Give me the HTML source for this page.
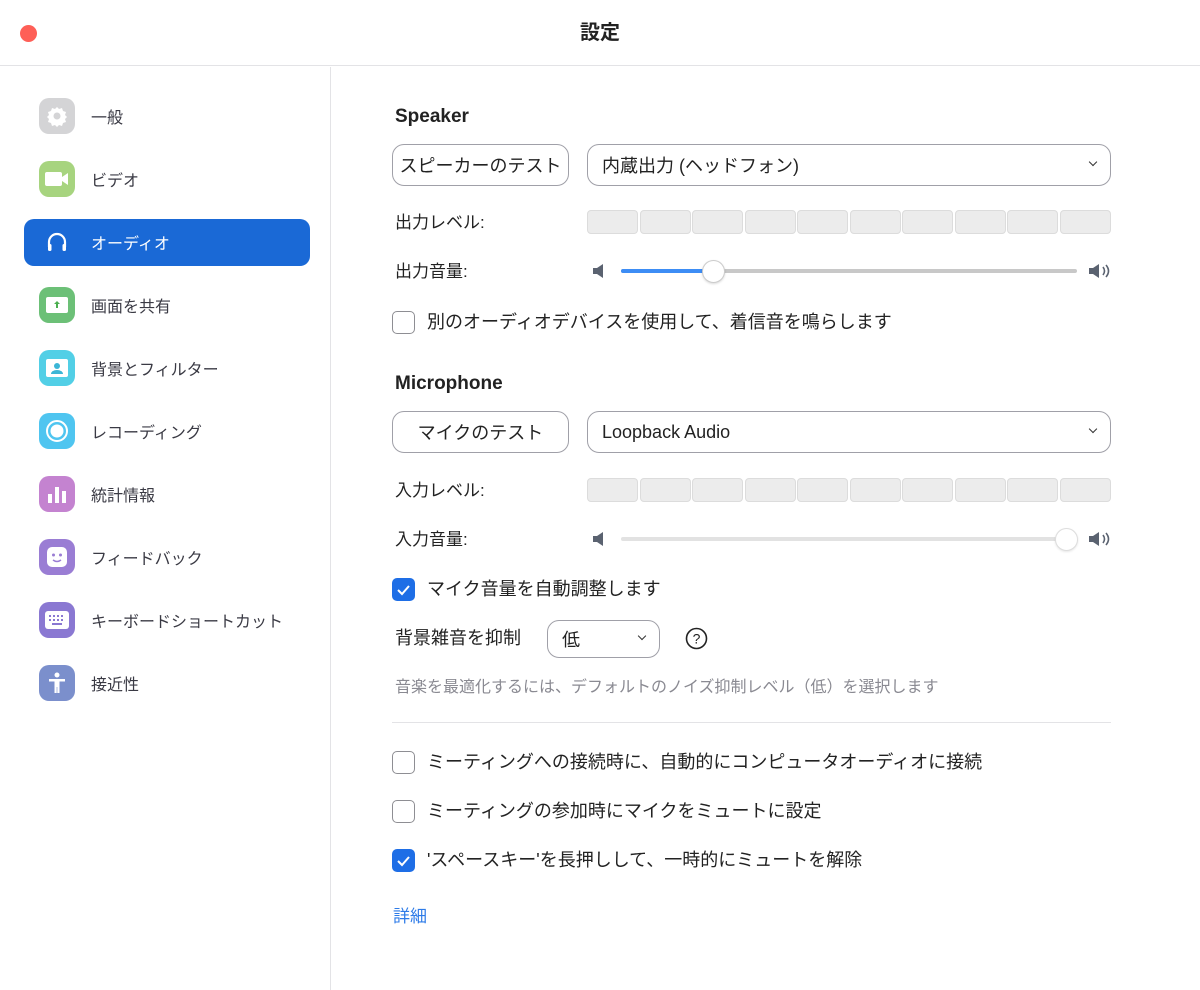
<!DOCTYPE html>
<html><head><meta charset="utf-8"><style>
*{box-sizing:border-box;margin:0;padding:0}
body{width:1200px;height:990px;background:#fff;font-family:"Liberation Sans","Noto Sans CJK JP",sans-serif;color:#222;position:relative;overflow:hidden;font-size:16px}
.abs{position:absolute}
.title{left:0;top:0;width:1200px;height:66px;border-bottom:1px solid #e3e3e6;text-align:center;line-height:66px;font-size:20px;font-weight:bold;color:#222}
.dot{left:20px;top:25px;width:17px;height:17px;border-radius:50%;background:#fe5f57}
.side{left:0;top:67px;width:331px;height:923px;border-right:1px solid #e3e3e6}
.item{position:absolute;left:39px;height:36px;display:flex;align-items:center;font-size:16px;color:#3a3a44}
.ic{width:36px;height:36px;border-radius:10px;margin-right:16px;display:flex;align-items:center;justify-content:center}
.sel{left:24px;top:219px;width:286px;height:47px;border-radius:10px;background:#1a69d6}
.lbl{font-size:17px;color:#222;line-height:22px}
.lb{font-size:18px;color:#222;line-height:22px}
.btn{border:1.5px solid #a0a0a8;border-radius:12px;background:#fff;font-size:18px;display:flex;align-items:center}
.seg{top:0;height:24px;width:51px;background:#ececec;border:1px solid #dcdcdc;border-radius:4px}
.cb{width:23px;height:23px;border:1.5px solid #8e8e93;border-radius:5px;background:#fff}
.cbc{width:23px;height:23px;border-radius:5px;background:#1e6ee6}
.chev{position:absolute;width:7px;height:7px;border-right:1.5px solid #333;border-bottom:1.5px solid #333;transform:rotate(45deg)}
</style></head><body>
<div class="abs title">設定</div>
<div class="abs dot"></div>
<div class="abs side"></div>
<div class="abs sel"></div>

<div class="item" style="top:98px"><div class="ic" style="background:#d4d4d6"><svg width="22" height="22" viewBox="0 0 22 22"><path d="M11 2l2 2 3-1 1 3 3 1-1 3 2 2-2 2 1 3-3 1-1 3-3-1-2 2-2-2-3 1-1-3-3-1 1-3-2-2 2-2-1-3 3-1 1-3 3 1z" fill="#fff"/><circle cx="11" cy="11" r="3.5" fill="#d4d4d6"/></svg></div>一般</div>
<div class="item" style="top:161px"><div class="ic" style="background:#a7d47f"><svg width="24" height="16"><rect x="0" y="1" width="17" height="14" rx="2" fill="#fff"/><path d="M17 6l6-4v12l-6-4z" fill="#fff"/></svg></div>ビデオ</div>
<div class="item" style="top:224px;color:#fff"><div class="ic"><svg width="22" height="22" viewBox="0 0 22 22"><path d="M3 16v-5a8 8 0 0 1 16 0v5" fill="none" stroke="#fff" stroke-width="2.2"/><rect x="2" y="13" width="3.5" height="7" rx="1.5" fill="#fff"/><rect x="16.5" y="13" width="3.5" height="7" rx="1.5" fill="#fff"/></svg></div>オーディオ</div>
<div class="item" style="top:287px"><div class="ic" style="background:#6cc077"><svg width="22" height="16"><rect x="0" y="0" width="22" height="16" rx="2" fill="#fff"/><path d="M11 4l-3 3h2v4h2V7h2z" fill="#4caf50"/></svg></div>画面を共有</div>
<div class="item" style="top:350px"><div class="ic" style="background:#52cfe6"><svg width="22" height="18"><rect x="0" y="0" width="22" height="18" rx="2" fill="#fff"/><circle cx="11" cy="7" r="3" fill="#3bb6d6"/><path d="M5 15a6 4 0 0 1 12 0z" fill="#3bb6d6"/></svg></div>背景とフィルター</div>
<div class="item" style="top:413px"><div class="ic" style="background:#4fc5f0"><svg width="24" height="24"><circle cx="12" cy="12" r="10" fill="none" stroke="#fff" stroke-width="2"/><circle cx="12" cy="12" r="6.5" fill="#fff"/></svg></div>レコーディング</div>
<div class="item" style="top:476px"><div class="ic" style="background:#c483d0"><svg width="20" height="18"><rect x="1" y="9" width="4" height="9" fill="#fff"/><rect x="8" y="2" width="4" height="16" fill="#fff"/><rect x="15" y="6" width="4" height="12" fill="#fff"/></svg></div>統計情報</div>
<div class="item" style="top:539px"><div class="ic" style="background:#9a7dd4"><svg width="22" height="22"><rect x="1" y="1" width="20" height="20" rx="5" fill="#fff"/><circle cx="7.5" cy="9" r="1.5" fill="#9a7dd4"/><circle cx="14.5" cy="9" r="1.5" fill="#9a7dd4"/><path d="M7 14q4 3 8 0" fill="none" stroke="#9a7dd4" stroke-width="1.5"/></svg></div>フィードバック</div>
<div class="item" style="top:602px"><div class="ic" style="background:#8a78d2"><svg width="24" height="18"><rect x="0" y="0" width="24" height="18" rx="3" fill="#fff"/><g fill="#8a78d2"><rect x="4" y="4" width="2" height="2"/><rect x="8" y="4" width="2" height="2"/><rect x="12" y="4" width="2" height="2"/><rect x="16" y="4" width="2" height="2"/><rect x="4" y="8" width="2" height="2"/><rect x="8" y="8" width="2" height="2"/><rect x="12" y="8" width="2" height="2"/><rect x="16" y="8" width="2" height="2"/><rect x="7" y="12" width="10" height="2"/></g></svg></div>キーボードショートカット</div>
<div class="item" style="top:665px"><div class="ic" style="background:#7b8fcc"><svg width="22" height="24"><circle cx="11" cy="4" r="2.5" fill="#fff"/><path d="M3 8h16v2.5h-5.5V22h-2.2v-6h-0.6v6H8.5V10.5H3z" fill="#fff"/></svg></div>接近性</div>

<div class="abs" style="left:395px;top:106px;font-size:19px;font-weight:bold">Speaker</div>
<div class="abs btn" style="left:392px;top:144px;width:177px;height:42px;justify-content:center">スピーカーのテスト</div>
<div class="abs btn" style="left:587px;top:144px;width:524px;height:42px;padding-left:14px">内蔵出力 (ヘッドフォン)<div class="chev" style="right:14px;top:14px;width:6px;height:6px"></div></div>
<div class="abs lbl" style="left:395px;top:212px">出力レベル:</div>
<div class="abs" style="left:587px;top:210px;width:524px;height:24px">
<div class="abs seg" style="left:0"></div><div class="abs seg" style="left:52.5px"></div><div class="abs seg" style="left:105px"></div><div class="abs seg" style="left:157.5px"></div><div class="abs seg" style="left:210px"></div><div class="abs seg" style="left:262.5px"></div><div class="abs seg" style="left:315px"></div><div class="abs seg" style="left:367.5px"></div><div class="abs seg" style="left:420px"></div><div class="abs seg" style="left:472.5px"></div></div>
<div class="abs lbl" style="left:395px;top:261px">出力音量:</div>
<svg class="abs" style="left:592px;top:263px" width="14" height="16"><path d="M1 5h4l6-4v14l-6-4H1z" fill="#5a6270"/></svg>
<div class="abs" style="left:621px;top:269px;width:456px;height:4px;border-radius:2px;background:#c8c8c8"></div>
<div class="abs" style="left:621px;top:269px;width:92px;height:4px;border-radius:2px;background:#3d8df5"></div>
<div class="abs" style="left:702px;top:260px;width:23px;height:23px;border-radius:50%;background:#fff;border:1px solid #ccc;box-shadow:0 1px 2px rgba(0,0,0,.15)"></div>
<svg class="abs" style="left:1088px;top:263px" width="24" height="16"><path d="M1 5h4l6-4v14l-6-4H1z" fill="#5a6270"/><path d="M15 4q3 4 0 8M18 2q5 6 0 12" fill="none" stroke="#5a6270" stroke-width="1.6"/></svg>
<div class="abs cb" style="left:392px;top:311px"></div>
<div class="abs lb" style="left:427px;top:311px">別のオーディオデバイスを使用して、着信音を鳴らします</div>

<div class="abs" style="left:395px;top:373px;font-size:19px;font-weight:bold">Microphone</div>
<div class="abs btn" style="left:392px;top:411px;width:177px;height:42px;justify-content:center">マイクのテスト</div>
<div class="abs btn" style="left:587px;top:411px;width:524px;height:42px;padding-left:14px">Loopback Audio<div class="chev" style="right:14px;top:14px;width:6px;height:6px"></div></div>
<div class="abs lbl" style="left:395px;top:480px">入力レベル:</div>
<div class="abs" style="left:587px;top:478px;width:524px;height:24px">
<div class="abs seg" style="left:0"></div><div class="abs seg" style="left:52.5px"></div><div class="abs seg" style="left:105px"></div><div class="abs seg" style="left:157.5px"></div><div class="abs seg" style="left:210px"></div><div class="abs seg" style="left:262.5px"></div><div class="abs seg" style="left:315px"></div><div class="abs seg" style="left:367.5px"></div><div class="abs seg" style="left:420px"></div><div class="abs seg" style="left:472.5px"></div></div>
<div class="abs lbl" style="left:395px;top:529px">入力音量:</div>
<svg class="abs" style="left:592px;top:531px" width="14" height="16"><path d="M1 5h4l6-4v14l-6-4H1z" fill="#5a6270"/></svg>
<div class="abs" style="left:621px;top:537px;width:456px;height:4px;border-radius:2px;background:#e2e2e2"></div>
<div class="abs" style="left:1055px;top:528px;width:23px;height:23px;border-radius:50%;background:#fff;border:1px solid #ddd;box-shadow:0 1px 2px rgba(0,0,0,.1)"></div>
<svg class="abs" style="left:1088px;top:531px" width="24" height="16"><path d="M1 5h4l6-4v14l-6-4H1z" fill="#5a6270"/><path d="M15 4q3 4 0 8M18 2q5 6 0 12" fill="none" stroke="#5a6270" stroke-width="1.6"/></svg>
<div class="abs cbc" style="left:392px;top:578px"><svg width="23" height="23"><path d="M6 12l4 4 7-8" fill="none" stroke="#fff" stroke-width="2"/></svg></div>
<div class="abs lb" style="left:427px;top:578px">マイク音量を自動調整します</div>
<div class="abs lb" style="left:395px;top:627px">背景雑音を抑制</div>
<div class="abs btn" style="left:547px;top:620px;width:113px;height:38px;padding-left:14px">低<div class="chev" style="right:14px;top:12px;width:6px;height:6px"></div></div>
<svg class="abs" style="left:685px;top:627px" width="23" height="23"><circle cx="11.5" cy="11.5" r="10" fill="none" stroke="#222" stroke-width="1.6"/><text x="11.5" y="16.5" text-anchor="middle" font-size="14" font-family="Liberation Sans" fill="#222">?</text></svg>
<div class="abs" style="left:395px;top:677px;font-size:16px;line-height:22px;color:#8a8a92">音楽を最適化するには、デフォルトのノイズ抑制レベル（低）を選択します</div>
<div class="abs" style="left:392px;top:722px;width:719px;height:1px;background:#e3e3e6"></div>
<div class="abs cb" style="left:392px;top:751px"></div>
<div class="abs lb" style="left:427px;top:751px">ミーティングへの接続時に、自動的にコンピュータオーディオに接続</div>
<div class="abs cb" style="left:392px;top:800px"></div>
<div class="abs lb" style="left:427px;top:800px">ミーティングの参加時にマイクをミュートに設定</div>
<div class="abs cbc" style="left:392px;top:849px"><svg width="23" height="23"><path d="M6 12l4 4 7-8" fill="none" stroke="#fff" stroke-width="2"/></svg></div>
<div class="abs lb" style="left:427px;top:849px">'スペースキー'を長押しして、一時的にミュートを解除</div>
<div class="abs" style="left:393px;top:906px;font-size:17px;line-height:22px;color:#2d7be8">詳細</div>
</body></html>
